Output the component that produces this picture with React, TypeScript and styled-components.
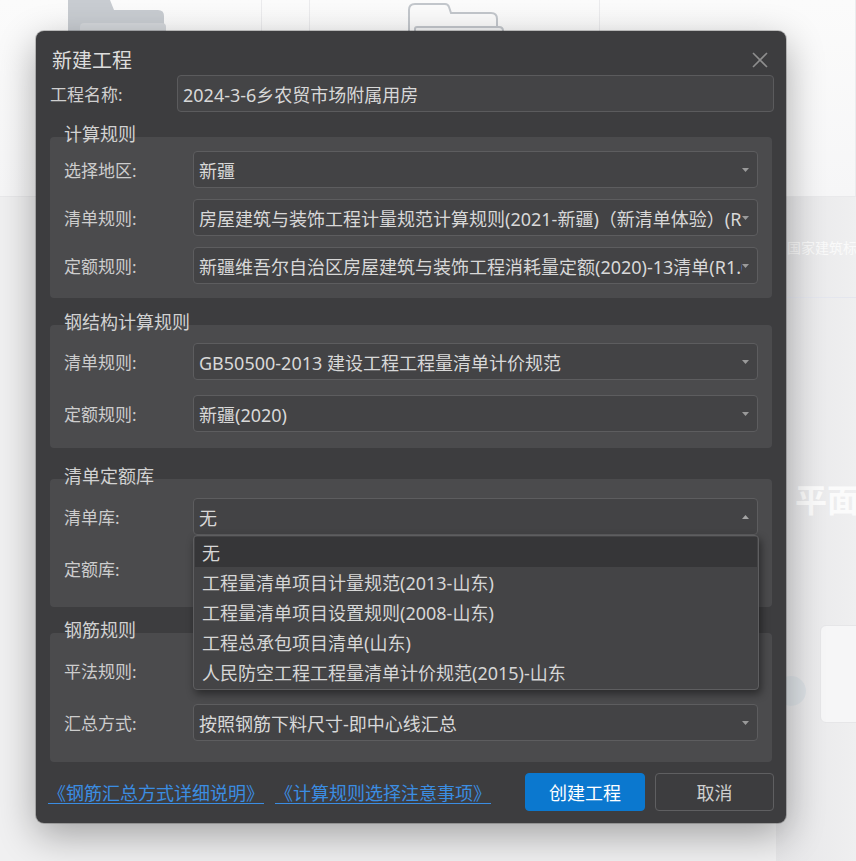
import React from "react"
import styled, { createGlobalStyle } from "styled-components"

const GlobalStyle = createGlobalStyle`
  html, body {
    margin: 0;
    padding: 0;
  }
  body {
    background: #f1f1f2;
    font-family: "Noto Sans", "Noto Sans CJK SC", sans-serif;
  }
`

const FolderFilled = () => (
  <svg width="100" height="44" viewBox="0 0 100 44">
    <path d="M0 0 H42 L46 10 H90 Q96 10 96 16 V44 H0 Z" fill="#c8ccd1" />
    <rect x="12" y="23" width="86" height="21" rx="4" fill="#d4d7db" />
  </svg>
)

const FolderOutline = () => (
  <svg width="100" height="44" viewBox="0 0 100 44">
    <path d="M10 4 H40 Q43 4 44 7 L46 13 H86 Q92 13 92 19 V44 H4 V10 Q4 4 10 4 Z" fill="#fbfbfb" stroke="#c3c7cc" strokeWidth="2" />
    <path d="M12 27 H94 Q98 27 98 31 V44 H10 V29 Q10 27 12 27 Z" fill="#f4f5f6" stroke="#c3c7cc" strokeWidth="2" />
  </svg>
)

const CloseIcon = () => (
  <svg width="16" height="16" viewBox="0 0 16 16">
    <path d="M1 1 L15 15 M15 1 L1 15" stroke="#8e8e8e" strokeWidth="1.6" fill="none" />
  </svg>
)

const Caret = ({ up }: { up?: boolean }) => (
  <svg width="7" height="4" viewBox="0 0 7 4" style={{ flexShrink: 0 }}>
    {up ? <path d="M0 4 L3.5 0 L7 4 Z" fill="#a4a4a4" /> : <path d="M0 0 L7 0 L3.5 4 Z" fill="#9a9a9a" />}
  </svg>
)

interface FieldProps {
  label: string
  value: string
  open?: boolean
  options?: string[]
}

function SelectRow({ label, value, open, options }: FieldProps) {
  return (
    <Row>
      <RowLabel>{label}</RowLabel>
      <Select>
        <Value>{value}</Value>
        <Caret up={open} />
        {open && options && (
          <DropList>
            {options.map((o, i) => (
              <Option key={o} $active={i === 0}>
                {o}
              </Option>
            ))}
          </DropList>
        )}
      </Select>
    </Row>
  )
}

interface GroupProps {
  title: string
  mt: number
  pt: number
  pb: number
  gap: number
  children: React.ReactNode
}

function Group({ title, mt, pt, pb, gap, children }: GroupProps) {
  return (
    <GroupWrap $mt={mt}>
      <Legend>{title}</Legend>
      <GroupBox $pt={pt} $pb={pb} $gap={gap}>
        {children}
      </GroupBox>
    </GroupWrap>
  )
}

const listOptions = [
  "无",
  "工程量清单项目计量规范(2013-山东)",
  "工程量清单项目设置规则(2008-山东)",
  "工程总承包项目清单(山东)",
  "人民防空工程工程量清单计价规范(2015)-山东",
]

export default function App() {
  return (
    <>
      <GlobalStyle />
      <Page>
        <TopStrip>
          <Tile $w={262} $pl={68}>
            <FolderFilled />
          </Tile>
          <Tile $w={48} $pl={0} />
          <Tile $w={290} $pl={95}>
            <FolderOutline />
          </Tile>
          <Tile $w={256} $pl={0} />
        </TopStrip>
        <Lower>
          <Spacer />
          <SidePanel>
            <SideCaption>国家建筑标准设计</SideCaption>
            <SideTitle>平面图</SideTitle>
            <SideFoot>
              <Bubble />
              <SideCard />
            </SideFoot>
          </SidePanel>
        </Lower>

        <Dialog>
          <Header>
            <Title>新建工程</Title>
            <CloseButton>
              <CloseIcon />
            </CloseButton>
          </Header>
          <NameRow>
            <NameLabel>工程名称:</NameLabel>
            <TextInput>2024-3-6乡农贸市场附属用房</TextInput>
          </NameRow>

          <Group title="计算规则" mt={10} pt={14} pb={14} gap={11}>
            <SelectRow label="选择地区:" value="新疆" />
            <SelectRow label="清单规则:" value="房屋建筑与装饰工程计量规范计算规则(2021-新疆)（新清单体验）(R1.0.38.0)" />
            <SelectRow label="定额规则:" value="新疆维吾尔自治区房屋建筑与装饰工程消耗量定额(2020)-13清单(R1.0.38.0)" />
          </Group>

          <Group title="钢结构计算规则" mt={12} pt={18} pb={16} gap={15}>
            <SelectRow label="清单规则:" value="GB50500-2013 建设工程工程量清单计价规范" />
            <SelectRow label="定额规则:" value="新疆(2020)" />
          </Group>

          <Group title="清单定额库" mt={16} pt={19} pb={20} gap={15}>
            <SelectRow label="清单库:" value="无" open options={listOptions} />
            <SelectRow label="定额库:" value="无" />
          </Group>

          <Group title="钢筋规则" mt={11} pt={19} pb={21} gap={15}>
            <SelectRow label="平法规则:" value="22系平法规则" />
            <SelectRow label="汇总方式:" value="按照钢筋下料尺寸-即中心线汇总" />
          </Group>

          <Footer>
            <Links>
              <LinkText>《钢筋汇总方式详细说明》</LinkText>
              <LinkText>《计算规则选择注意事项》</LinkText>
            </Links>
            <Buttons>
              <Button $primary>创建工程</Button>
              <Button>取消</Button>
            </Buttons>
          </Footer>
        </Dialog>
      </Page>
    </>
  )
}

const Page = styled.div`
  position: relative;
  width: 856px;
  height: 861px;
  overflow: hidden;
  background: #f0f0f1;
  display: flex;
  flex-direction: column;
`

const TopStrip = styled.div`
  display: flex;
  height: 196px;
  background: linear-gradient(#fbfbfb, #f6f6f7);
  border-bottom: 1px solid #e9e9eb;
`

const Tile = styled.div<{ $w: number; $pl: number }>`
  width: ${({ $w }) => $w}px;
  box-sizing: border-box;
  padding-left: ${({ $pl }) => $pl}px;
  border-right: 1px solid #ebebed;
  display: flex;
  align-items: flex-start;
`

const Lower = styled.div`
  flex: 1;
  display: flex;
`

const Spacer = styled.div`
  flex: 1;
`

const SidePanel = styled.div`
  width: 80px;
  box-sizing: border-box;
  padding: 40px 0 0 11px;
  background: linear-gradient(90deg, #e6e6e8, #efeff0);
  display: flex;
  flex-direction: column;
  overflow: hidden;
`

const SideCaption = styled.div`
  font-family: "Noto Sans CJK SC", sans-serif;
  font-size: 14px;
  line-height: 20px;
  color: #fafafa;
  white-space: nowrap;
  padding-bottom: 40px;
  border-bottom: 1px solid #e4e6ee;
`

const SideTitle = styled.div`
  margin: 178px 0 0 8px;
  font-family: "Noto Sans CJK SC", sans-serif;
  font-size: 32px;
  font-weight: 700;
  line-height: 44px;
  color: #fbfbfb;
  white-space: nowrap;
`

const SideFoot = styled.div`
  margin-top: 105px;
  display: flex;
  align-items: flex-end;
`

const Bubble = styled.div`
  width: 30px;
  height: 30px;
  flex-shrink: 0;
  margin-left: -11px;
  margin-bottom: 17px;
  border-radius: 50%;
  background: #dde2e6;
`

const SideCard = styled.div`
  width: 60px;
  height: 96px;
  flex-shrink: 0;
  margin-left: 14px;
  border-radius: 6px;
  background: #f6f6f7;
  border: 1px solid #e6e6e8;
`

const Dialog = styled.div`
  position: absolute;
  left: 36px;
  top: 31px;
  width: 750px;
  box-sizing: border-box;
  padding: 15px 12px 12px 14px;
  background: #3d3d3f;
  border-radius: 8px;
  box-shadow: 0 12px 38px rgba(0, 0, 0, 0.33), 0 0 0 1px rgba(0, 0, 0, 0.2);
  display: flex;
  flex-direction: column;
  color: #d4d4d4;
`

const Header = styled.div`
  height: 28px;
  margin-bottom: 1px;
  padding-left: 2px;
  display: flex;
  align-items: center;
  justify-content: space-between;
`

const Title = styled.div`
  font-family: "Noto Sans CJK SC", sans-serif;
  font-size: 20px;
  line-height: 28px;
  color: #dddddd;
`

const CloseButton = styled.div`
  width: 16px;
  height: 16px;
  margin-right: 6px;
  display: flex;
`

const NameRow = styled.div`
  display: flex;
  align-items: center;
  height: 37px;
`

const NameLabel = styled.div`
  width: 127px;
  flex-shrink: 0;
  font-size: 17px;
  color: #cfcfcf;
`

const TextInput = styled.div`
  flex: 1;
  height: 37px;
  box-sizing: border-box;
  padding: 0 5px;
  display: flex;
  align-items: center;
  background: #444446;
  border: 1px solid #5b5b5d;
  border-radius: 4px;
  font-size: 18px;
  color: #d8d8d8;
`

const GroupWrap = styled.div<{ $mt: number }>`
  margin-top: ${({ $mt }) => $mt}px;
  margin-right: 2px;
  display: flex;
  flex-direction: column;
`

const Legend = styled.div`
  position: relative;
  z-index: 1;
  padding-left: 14px;
  margin-bottom: -9px;
  font-size: 18px;
  line-height: 24px;
  color: #d2d2d2;
`

const GroupBox = styled.div<{ $pt: number; $pb: number; $gap: number }>`
  padding: ${({ $pt }) => $pt}px 14px ${({ $pb }) => $pb}px 14px;
  display: flex;
  flex-direction: column;
  gap: ${({ $gap }) => $gap}px;
  background: #4b4b4d;
  border-radius: 4px;
`

const Row = styled.div`
  display: flex;
  align-items: center;
  height: 37px;
`

const RowLabel = styled.div`
  width: 129px;
  flex-shrink: 0;
  font-size: 17px;
  color: #cdcdcd;
`

const Select = styled.div`
  position: relative;
  flex: 1;
  min-width: 0;
  height: 37px;
  box-sizing: border-box;
  padding: 0 8px 0 5px;
  display: flex;
  align-items: center;
  background: #434345;
  border: 1px solid #5d5d5f;
  border-radius: 4px;
`

const Value = styled.div`
  flex: 1;
  min-width: 0;
  overflow: hidden;
  white-space: nowrap;
  font-size: 18px;
  color: #d8d8d8;
`

const DropList = styled.div`
  position: absolute;
  z-index: 5;
  top: calc(100% + 1px);
  left: -1px;
  right: -2px;
  box-sizing: border-box;
  padding: 1px 1px 2px;
  background: #444446;
  border: 1px solid #5e5e60;
  border-radius: 4px;
  box-shadow: 2px 4px 8px rgba(0, 0, 0, 0.45);
`

const Option = styled.div<{ $active?: boolean }>`
  height: 30px;
  padding-left: 7px;
  display: flex;
  align-items: center;
  font-size: 18px;
  white-space: nowrap;
  color: #d6d6d6;
  background: ${({ $active }) => ($active ? "#363638" : "transparent")};
`

const Footer = styled.div`
  margin-top: 11px;
  height: 38px;
  display: flex;
  align-items: center;
  justify-content: space-between;
`

const Links = styled.div`
  display: flex;
  gap: 11px;
  margin-left: -2px;
`

const LinkText = styled.span`
  font-size: 18px;
  color: #3b8de2;
  text-decoration: underline;
  text-underline-offset: 3px;
  cursor: pointer;
`

const Buttons = styled.div`
  display: flex;
  gap: 10px;
`

const Button = styled.div<{ $primary?: boolean }>`
  width: ${({ $primary }) => ($primary ? 120 : 119)}px;
  height: 38px;
  box-sizing: border-box;
  display: flex;
  align-items: center;
  justify-content: center;
  border-radius: 4px;
  font-size: 18px;
  color: ${({ $primary }) => ($primary ? "#ffffff" : "#cfcfcf")};
  background: ${({ $primary }) => ($primary ? "#0b78cf" : "transparent")};
  border: 1px solid ${({ $primary }) => ($primary ? "#0b78cf" : "#5f5f61")};
`
